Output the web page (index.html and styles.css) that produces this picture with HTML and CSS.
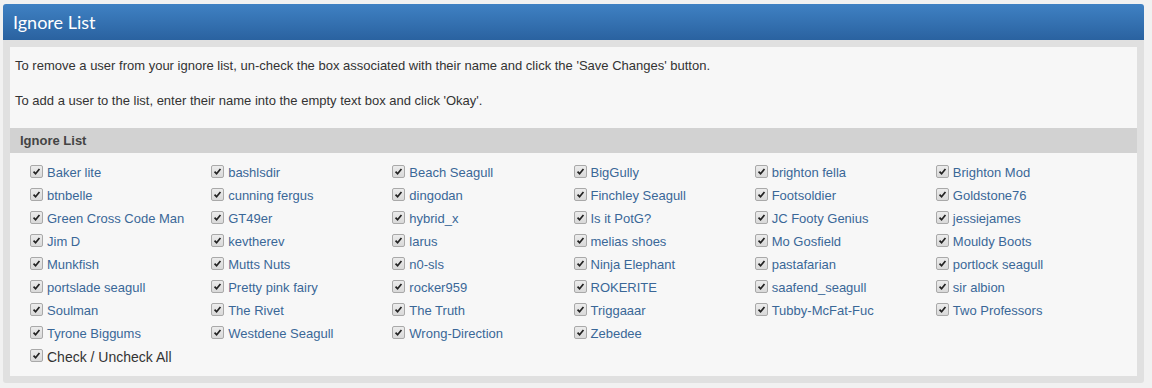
FILE: index.html
```html
<!DOCTYPE html>
<html lang="en">
<head>
<meta charset="UTF-8">
<title>Ignore List</title>
<link rel="stylesheet" href="styles.css">
</head>
<body>

<div class="panel">
  <div class="panel-head">Ignore List</div>
  <div class="panel-frame">
    <div class="panel-body">
      <p class="intro">To remove a user from your ignore list, un-check the box associated with their name and click the 'Save Changes' button.</p>
      <p class="intro">To add a user to the list, enter their name into the empty text box and click 'Okay'.</p>

      <div class="sub-head">Ignore List</div>

      <div class="user-grid" id="userGrid"></div>
      <label class="check-row all">
        <span class="box"><svg viewBox="0 0 13 13"><path d="M3 6.6 L5.4 9.2 L10 3.6" /></svg></span>
        Check / Uncheck All
      </label>
    </div>
  </div>
</div>

<script>
var users = [
  "Baker lite", "bashlsdir", "Beach Seagull", "BigGully", "brighton fella", "Brighton Mod",
  "btnbelle", "cunning fergus", "dingodan", "Finchley Seagull", "Footsoldier", "Goldstone76",
  "Green Cross Code Man", "GT49er", "hybrid_x", "Is it PotG?", "JC Footy Genius", "jessiejames",
  "Jim D", "kevtherev", "larus", "melias shoes", "Mo Gosfield", "Mouldy Boots",
  "Munkfish", "Mutts Nuts", "n0-sls", "Ninja Elephant", "pastafarian", "portlock seagull",
  "portslade seagull", "Pretty pink fairy", "rocker959", "ROKERITE", "saafend_seagull", "sir albion",
  "Soulman", "The Rivet", "The Truth", "Triggaaar", "Tubby-McFat-Fuc", "Two Professors",
  "Tyrone Biggums", "Westdene Seagull", "Wrong-Direction", "Zebedee"
];

var grid = document.getElementById("userGrid");
users.forEach(function(name) {
  var row = document.createElement("div");
  row.className = "check-row";
  row.innerHTML = '<span class="box"><svg viewBox="0 0 13 13"><path d="M3 6.6 L5.4 9.2 L10 3.6" /></svg></span>' +
    '<a href="#">' + name + '</a>';
  grid.appendChild(row);
});
</script>

</body>
</html>
```

FILE: styles.css
```css
body {
  margin: 0;
  padding: 4px 8px 0 3px;
  background-color: #f1f1f1;
  font-family: Arial, "Liberation Sans", sans-serif;
  font-size: 13px;
  color: #333;
}

.panel {
  width: 1141px;
}

/* blue title bar */
.panel-head {
  height: 36px;
  line-height: 36px;
  padding-left: 10px;
  border-radius: 3px 3px 0 0;
  background: linear-gradient(#3f81c3, #2a62a0);
  color: #fff;
  font-family: Lato, "Open Sans", sans-serif;
  font-size: 18px;
}

.panel-frame {
  background-color: #e0e0e0;
  padding: 7px;
  border-radius: 0 0 3px 3px;
}

.panel-body {
  background-color: #f7f7f7;
  padding: 11px 0 8px;
}

.intro {
  margin: 0 0 19px;
  padding: 0 5px;
  line-height: 16px;
}

.sub-head {
  margin-top: 19px;
  height: 25px;
  line-height: 25px;
  padding-left: 10px;
  background-color: #d2d2d2;
  font-weight: bold;
  color: #444;
}

.user-grid {
  display: grid;
  grid-template-columns: repeat(6, 1fr);
  padding: 8px 20px 0;
}

.check-row {
  display: flex;
  align-items: center;
  gap: 4px;
  height: 23px;
}

.check-row.all {
  padding-left: 20px;
  color: #333;
  font-size: 14px;
}

.check-row a {
  color: #3a6797;
  text-decoration: none;
}

.box {
  width: 11px;
  height: 11px;
  border: 1px solid #a9a9a9;
  border-radius: 2px;
  background: linear-gradient(#ececec, #d9d9d9);
  margin-top: -3px;
  display: flex;
}

.box svg {
  width: 11px;
  height: 11px;
}

.box path {
  fill: none;
  stroke: #222;
  stroke-width: 2;
}
```
